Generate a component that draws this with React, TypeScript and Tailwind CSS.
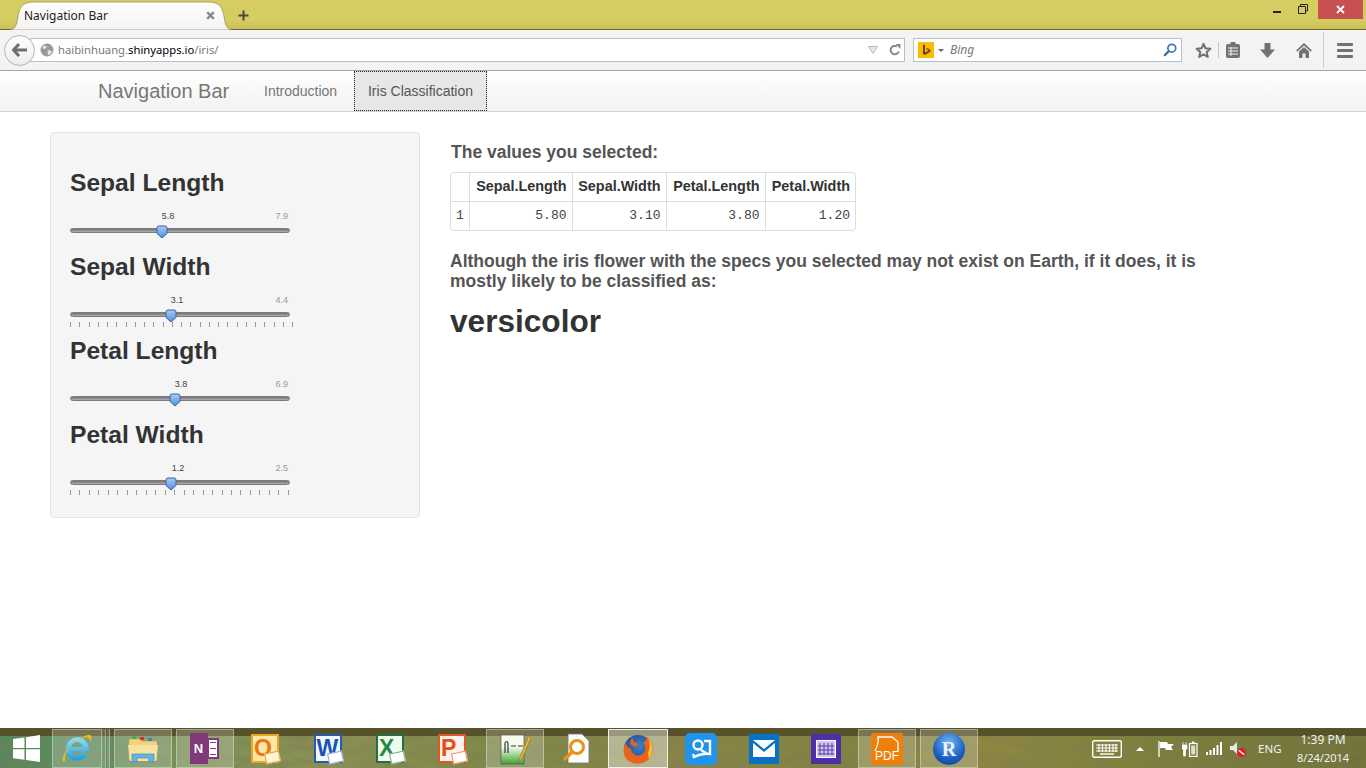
import React from "react";

const sliders = [
  { label: "Sepal Length", value: "5.8", max: "7.9", thumb: 91, text: 98, ticks: 0, tickWidth: 0 },
  { label: "Sepal Width", value: "3.1", max: "4.4", thumb: 100, text: 107, ticks: 25, tickWidth: 223 },
  { label: "Petal Length", value: "3.8", max: "6.9", thumb: 104, text: 111, ticks: 0, tickWidth: 0 },
  { label: "Petal Width", value: "1.2", max: "2.5", thumb: 100, text: 108, ticks: 24, tickWidth: 219 },
];

const Thumb = () => (
  <svg width="12" height="14" viewBox="0 0 12 14">
    <defs>
      <linearGradient id="thumbFill" x1="0" y1="0" x2="0" y2="1">
        <stop offset="0" stopColor="#a9cdf2" />
        <stop offset="1" stopColor="#4d8fdc" />
      </linearGradient>
    </defs>
    <path d="M1 3 Q1 1 3 1 H9 Q11 1 11 3 V8.5 L6 13 L1 8.5 Z" fill="url(#thumbFill)" stroke="#3b5fa8" strokeWidth="1" />
  </svg>
);

const Slider = ({ s }: { s: (typeof sliders)[number] }) => (
  <div className="h-[84px]">
    <h3 className="h-[27px] pt-px text-[24.6px] leading-[26px] font-bold text-[#333]">{s.label}</h3>
    <div className="relative mt-[15px] h-[10px] w-[220px] text-[9px] leading-[10px]">
      <span className="absolute top-0 -translate-x-1/2 text-[#444]" style={{ left: s.text }}>{s.value}</span>
      <span className="absolute top-0 right-[2px] text-[#999]">{s.max}</span>
    </div>
    <div className="relative mt-[7px] h-[5px] w-[220px] rounded-[3px] border border-[#7c7c7c] bg-[linear-gradient(#6e6e6e,#b0b0b0)]">
      <div className="absolute top-[-4px] -translate-x-1/2" style={{ left: s.thumb }}>
        <Thumb />
      </div>
    </div>
    {s.ticks > 0 && (
      <div className="mt-[5px] flex justify-between" style={{ width: s.tickWidth }}>
        {Array.from({ length: s.ticks }).map((_, i) => (
          <span key={i} className="h-[5px] w-px bg-[#999]" />
        ))}
      </div>
    )}
  </div>
);

const TitleBar = () => (
  <div className="relative flex h-[30px] shrink-0 items-start justify-between border-b border-[#6f6a34] bg-[linear-gradient(#d6cd62,#d5cc62_70%,#c8bf58)]">
    <div className="relative ml-[10px] h-[29px] w-[222px]">
      <svg className="absolute top-0 left-0" width="222" height="30" viewBox="0 0 222 30">
        <defs>
          <linearGradient id="tabFill" x1="0" y1="0" x2="0" y2="1">
            <stop offset="0" stopColor="#ffffff" />
            <stop offset="1" stopColor="#f3f3f3" />
          </linearGradient>
        </defs>
        <path d="M0 30 C8 29 7 18 9 12 C11 5 15 2 24 2 H198 C207 2 211 5 213 12 C215 18 214 29 222 30 Z" fill="url(#tabFill)" stroke="#8f8a4c" strokeWidth="0.7" />
      </svg>
      <span className="absolute top-[7px] left-[14px] font-['Noto_Sans',sans-serif] text-[12px] leading-[17px] text-[#222]">Navigation Bar</span>
      <svg className="absolute top-[11px] left-[196px]" width="9" height="9" viewBox="0 0 9 9">
        <path d="M1.2 1.2 L7.8 7.8 M7.8 1.2 L1.2 7.8" stroke="#8a8a8a" strokeWidth="2.4" />
      </svg>
      <svg className="absolute top-[10px] left-[228px]" width="11" height="11" viewBox="0 0 11 11">
        <path d="M5.5 0.5 V10.5 M0.5 5.5 H10.5" stroke="#4a4a3a" strokeWidth="2" />
      </svg>
    </div>
    <div className="flex items-start">
      <span className="mt-[11px] mr-[17px] h-[2px] w-[8px] bg-[#222]" />
      <svg className="mt-[4px] mr-[10px]" width="10" height="10" viewBox="0 0 10 10">
        <path d="M2.5 2.5 V0.5 H9.5 V7 H7.5 M0.5 2.5 H7.5 V9.5 H0.5 Z" fill="none" stroke="#222" />
      </svg>
      <div className="mr-[3px] flex h-[19px] w-[45px] items-center justify-center bg-[#c75050]">
        <svg width="9" height="9" viewBox="0 0 9 9">
          <path d="M1 1 L8 8 M8 1 L1 8" stroke="#fff" strokeWidth="1.8" />
        </svg>
      </div>
    </div>
  </div>
);

const ToolBar = () => (
  <div className="relative flex h-[41px] shrink-0 items-center border-b border-[#a6a6a6] bg-[#f3f3f3]">
    <div className="relative z-10 ml-[4px] flex h-[31px] w-[31px] items-center justify-center rounded-full border border-[#b3b3b3] bg-[linear-gradient(#ffffff,#ececec)]">
      <svg width="16" height="14" viewBox="0 0 16 14">
        <path d="M7 1 L1.5 7 L7 13 M2 7 H15" fill="none" stroke="#6e6e6e" strokeWidth="3" />
      </svg>
    </div>
    <div className="-ml-[5px] flex h-[24px] w-[875px] items-center border border-[#b8c0cb] bg-white pl-[9px]">
      <svg width="14" height="14" viewBox="0 0 14 14">
        <circle cx="7" cy="7" r="6.5" fill="#9a9a9a" />
        <path d="M3 3 Q6 2 7 4 Q6 6 4 6 Q2 6 3 3 M8 7 L12 8 Q11 12 8 12 Q7 9 8 7" fill="#e4e4e4" />
      </svg>
      <span className="ml-[4px] font-['Noto_Sans',sans-serif] text-[11.25px] text-[#7a7a7a]">
        haibinhuang.<span className="text-black">shinyapps.io</span>/iris/
      </span>
      <svg className="mr-[11px] ml-auto" width="10" height="8" viewBox="0 0 10 8">
        <path d="M0.5 0.5 H9.5 L5 7.5 Z" fill="#e4e8ec" stroke="#b4bac2" />
      </svg>
      <svg className="mr-[3px]" width="12" height="12" viewBox="0 0 12 12">
        <path d="M9.8 7.5 A4.2 4.2 0 1 1 8 2.5" fill="none" stroke="#7f8a96" strokeWidth="2" />
        <path d="M6.5 0 H11.5 V5 Z" fill="#7f8a96" />
      </svg>
    </div>
    <div className="ml-[8px] flex h-[24px] w-[269px] items-center border border-[#b8c0cb] bg-white pl-[4px]">
      <div className="flex h-[16px] w-[16px] items-center justify-center bg-[#ffb900]">
        <svg width="9" height="12" viewBox="0 0 9 12">
          <path d="M1 0.5 L3 1 V8.5 L7 6.5 L4.8 5.5 L4.2 3.8 L8.5 5.8 V7.5 L3 11 L1 10 Z" fill="#5d4a20" />
        </svg>
      </div>
      <span className="mt-[1px] ml-[4px] h-0 w-0 border-x-[3px] border-t-[3px] border-x-transparent border-t-[#666]" />
      <span className="ml-[6px] font-['Noto_Sans',sans-serif] text-[12px] text-[#777] italic">Bing</span>
      <svg className="mr-[4px] ml-auto" width="14" height="14" viewBox="0 0 14 14">
        <circle cx="8.8" cy="5.2" r="3.9" fill="none" stroke="#3a7ab5" strokeWidth="1.7" />
        <path d="M6 8 L1.2 12.8" stroke="#2d6aa3" strokeWidth="2.2" />
      </svg>
    </div>
    <svg className="ml-[13px]" width="17" height="17" viewBox="0 0 17 17">
      <path d="M8.5 1.8 L10.5 6.3 L15.4 6.8 L11.7 10 L12.8 14.9 L8.5 12.4 L4.2 14.9 L5.3 10 L1.6 6.8 L6.5 6.3 Z" fill="none" stroke="#6f7174" strokeWidth="2" strokeLinejoin="round" />
    </svg>
    <span className="ml-[6px] h-[16px] w-px bg-[#c5c5c5]" />
    <svg className="ml-[7px]" width="14" height="16" viewBox="0 0 14 16">
      <rect x="0" y="2" width="14" height="14" rx="2" fill="#707275" />
      <rect x="4.5" y="0" width="5" height="4" fill="#707275" />
      <path d="M2 6 H12 M2 9 H12 M2 12 H12 M5 5 V14" stroke="#f0f0f0" strokeWidth="1" />
    </svg>
    <svg className="ml-[20px]" width="15" height="15" viewBox="0 0 15 15">
      <path d="M4.5 0 H10.5 V6.5 H15 L7.5 15 L0 6.5 H4.5 Z" fill="#707275" />
    </svg>
    <svg className="ml-[21px]" width="16" height="15" viewBox="0 0 16 15">
      <path d="M8 0 L16 7.5 L14.6 8.5 L8 2.6 L1.4 8.5 L0 7.5 Z" fill="#707275" />
      <path d="M3 8.5 L8 4 L13 8.5 V15 H9.5 V10.5 H6.5 V15 H3 Z" fill="#707275" />
    </svg>
    <span className="ml-[11px] h-[36px] w-px bg-[#cfcfcf]" />
    <div className="ml-[13px] flex w-[16px] flex-col gap-[3px]">
      <span className="h-[3px] rounded-[1px] bg-[#6f7174]" />
      <span className="h-[3px] rounded-[1px] bg-[#6f7174]" />
      <span className="h-[3px] rounded-[1px] bg-[#6f7174]" />
    </div>
  </div>
);

const NavBar = () => (
  <nav className="flex h-[41px] shrink-0 items-center border-b border-[#d4d4d4] bg-[linear-gradient(#ffffff,#f2f2f2)] pl-[98px] text-[14px] text-[#777]">
    <span className="w-[166px] text-[20px]">Navigation Bar</span>
    <span className="w-[90px]">Introduction</span>
    <span className="flex h-[40px] w-[133px] items-center justify-center border border-dotted border-[#222] bg-[#e7e7e7] text-[#555]">Iris Classification</span>
  </nav>
);

const headers = ["Sepal.Length", "Sepal.Width", "Petal.Length", "Petal.Width"];
const values = ["5.80", "3.10", "3.80", "1.20"];

const ValuesTable = () => (
  <div className="w-[406px] overflow-hidden rounded-[4px] border border-[#ddd]">
    <table className="w-full table-fixed border-collapse">
      <colgroup>
        <col className="w-[18px]" />
        <col className="w-[103px]" />
        <col className="w-[94px]" />
        <col className="w-[99px]" />
        <col />
      </colgroup>
      <tbody>
        <tr className="h-[28px]">
          <td className="border-r border-b border-[#ddd]" />
          {headers.map((h) => (
            <th key={h} className="border-r border-b border-[#ddd] pt-px pr-[5px] text-right text-[14.4px] font-bold text-[#333] last:border-r-0">{h}</th>
          ))}
        </tr>
        <tr className="h-[29px] font-['Liberation_Mono',monospace] text-[13px] text-[#444]">
          <td className="border-r border-[#ddd] pl-[5px]">1</td>
          {values.map((v) => (
            <td key={v} className="border-r border-[#ddd] pr-[5px] text-right last:border-r-0">{v}</td>
          ))}
        </tr>
      </tbody>
    </table>
  </div>
);

const TaskBtn = ({ w, active, children }: { w: string; active?: boolean; children: React.ReactNode }) => (
  <div className={`flex h-[39px] shrink-0 items-center justify-center border ${w} ${active ? "border-[#f0f0ec] bg-white/40" : "border-white/35 bg-white/20"}`}>
    {children}
  </div>
);

const Pin = ({ w, children }: { w: string; children: React.ReactNode }) => (
  <div className={`flex h-[39px] shrink-0 items-center justify-center ${w}`}>{children}</div>
);

const WinLogo = () => (
  <svg width="27" height="27" viewBox="0 0 27 27">
    <path d="M0 4 L11.5 2.4 V13 H0 Z M13 2.2 L27 0 V13 H13 Z M0 14.3 H11.5 V24.8 L0 23.2 Z M13 14.3 H27 V27 L13 25 Z" fill="#fff" />
  </svg>
);

const IeIcon = () => (
  <svg width="34" height="34" viewBox="0 0 32 32">
    <defs>
      <linearGradient id="ieFill" x1="0" y1="0" x2="0" y2="1">
        <stop offset="0" stopColor="#8fe0f8" />
        <stop offset="1" stopColor="#1f9be0" />
      </linearGradient>
    </defs>
    <path d="M16 5 A11 11 0 1 0 26.5 20 H20 A5.5 5.5 0 0 1 10.5 18 H27 A11 11 0 0 0 16 5 Z M10.6 14 A5.5 5.5 0 0 1 21.4 14 Z" fill="url(#ieFill)" fillRule="evenodd" />
    <path d="M3 28 C0 22 12 8 25 3 C30 1 31 5 28 10 C29 4 24 4 18 7 C9 12 3 22 5 27 Z" fill="#f4b81f" />
  </svg>
);

const FolderIcon = () => (
  <svg width="32" height="30" viewBox="0 0 32 30">
    <path d="M2 5 H13 L15 7 H30 V26 H2 Z" fill="#f1d27d" stroke="#c9a650" strokeWidth="0.7" />
    <rect x="5" y="2" width="4" height="3" fill="#3eb54a" />
    <rect x="13" y="3" width="4" height="3" fill="#c8382d" />
    <rect x="21" y="4" width="4" height="3" fill="#3b7fd0" />
    <path d="M1 11 H31 L29 27 H3 Z" fill="#f7e3a1" />
    <path d="M5 28 V20 H27 V28 H22 V24 H10 V28 Z" fill="#66b4e2" stroke="#3e8cc0" strokeWidth="0.7" />
  </svg>
);

const OneNoteIcon = () => (
  <div className="relative h-[31px] w-[31px]">
    <span className="absolute top-[5px] left-[17px] flex h-[21px] w-[12px] flex-col justify-around border-2 border-[#80397b] bg-white px-px">
      <span className="h-px bg-[#80397b]" />
      <span className="h-px bg-[#80397b]" />
      <span className="h-px bg-[#80397b]" />
    </span>
    <span className="absolute top-0 left-0 flex h-[31px] w-[18px] items-center justify-center bg-[#80397b] text-[13px] font-bold text-white">N</span>
  </div>
);

const OfficeTile = ({ letter, bg, color, border, sheet }: { letter: string; bg: string; color: string; border: string; sheet: string }) => (
  <div className={`relative flex h-[29px] w-[28px] items-center justify-start border-2 pl-px ${bg} ${border}`}>
    <span className={`text-[23px] leading-none font-bold ${color}`}>{letter}</span>
    <span className={`absolute right-[-3px] bottom-[-2px] h-[11px] w-[15px] -rotate-12 border ${sheet}`} />
  </div>
);

const NppIcon = () => (
  <svg width="32" height="32" viewBox="0 0 32 32">
    <defs>
      <linearGradient id="nppFill" x1="0" y1="0" x2="0" y2="1">
        <stop offset="0.4" stopColor="#f6fbf0" />
        <stop offset="1" stopColor="#3fa52c" />
      </linearGradient>
    </defs>
    <rect x="2" y="2" width="23" height="29" fill="url(#nppFill)" stroke="#555" strokeWidth="0.7" />
    <path d="M6 20 V10 Q8 7 9 10 V20 M12 13 H17 M19 13 H24" fill="none" stroke="#333" strokeWidth="1.2" />
    <path d="M30 2 L21 24 L19 29 L23 26 L32 5 Z" fill="#e8b33c" stroke="#8a6a20" strokeWidth="0.6" />
  </svg>
);

const FileSearchIcon = () => (
  <svg width="28" height="32" viewBox="0 0 28 32">
    <path d="M6 1 H20 L27 8 V30 H6 Z" fill="#fbfbfb" stroke="#777" strokeWidth="0.8" />
    <circle cx="15" cy="14" r="6.5" fill="#fff" stroke="#e8911d" strokeWidth="3" />
    <path d="M10 19 L2 27" stroke="#e8911d" strokeWidth="3.5" />
  </svg>
);

const FirefoxIcon = () => (
  <svg width="32" height="32" viewBox="0 0 32 32">
    <defs>
      <radialGradient id="ffBlue" cx="0.55" cy="0.4" r="0.6">
        <stop offset="0" stopColor="#3f7fc8" />
        <stop offset="1" stopColor="#1d4a8c" />
      </radialGradient>
    </defs>
    <circle cx="16" cy="16" r="14" fill="url(#ffBlue)" />
    <path d="M24 3 C31 8 33 18 27 26 C21 32 9 33 3 24 C1 19 1 14 4 10 C5 14 7 15 9 16 C9 20 14 24 19 22 C24 20 25 14 21 10 C23 9 25 7 24 3 Z" fill="#e8641c" />
    <path d="M27 26 C32 18 31 9 24 3 C28 6 29 14 26 20 Z" fill="#f9c32a" />
    <path d="M10 4 L12 9 L17 11 L13 14 L8 11 Z" fill="#e8641c" />
  </svg>
);

const BaiduIcon = () => (
  <div className="flex h-[32px] w-[32px] items-center justify-center rounded-[5px] bg-[#1e94ec]">
    <svg width="24" height="24" viewBox="0 0 24 24">
      <circle cx="9" cy="8" r="4.5" fill="none" stroke="#fff" strokeWidth="2.4" />
      <path d="M15 4 H21 V17 Q14 16 5 20 L4 17 M12 13 L17 16" fill="none" stroke="#fff" strokeWidth="2.4" />
    </svg>
  </div>
);

const MailIcon = () => (
  <div className="flex h-[30px] w-[30px] items-center justify-center bg-[#0672c4]">
    <svg width="22" height="17" viewBox="0 0 22 17">
      <path d="M0 0 H22 L11 9 Z M0 3 L11 12 L22 3 V17 H0 Z" fill="#fff" />
    </svg>
  </div>
);

const CalendarIcon = () => (
  <div className="flex h-[30px] w-[30px] items-center justify-center bg-[#4e2fa6]">
    <svg width="20" height="18" viewBox="0 0 20 18">
      <rect x="0.5" y="0.5" width="19" height="17" fill="#cfc6ea" stroke="#fff" />
      <path d="M4 3 V15 M8 3 V15 M12 3 V15 M16 3 V15 M2 6 H18 M2 10 H18 M2 14 H18" stroke="#5a3ab0" strokeWidth="1" />
    </svg>
  </div>
);

const PdfIcon = () => (
  <div className="relative flex h-[32px] w-[32px] items-end justify-center rounded-[2px] bg-[#f07f09] pb-[2px]">
    <span className="text-[12px] leading-[13px] font-normal text-white">PDF</span>
    <svg className="absolute top-[2px] left-[3px]" width="26" height="16" viewBox="0 0 26 16">
      <path d="M1 16 Q5 8 4 2 H18 L24 7 V16" fill="none" stroke="#fff" strokeWidth="1.4" />
    </svg>
  </div>
);

const RIcon = () => (
  <div className="flex h-[32px] w-[32px] items-center justify-center rounded-full bg-[radial-gradient(circle_at_50%_30%,#6fb5f0,#1a5fc0_60%,#0c3a8c)]">
    <span className="font-['Liberation_Serif',serif] text-[20px] leading-none font-bold text-[#e8f2ff]">R</span>
  </div>
);

const Tray = () => (
  <div className="ml-auto flex h-[40px] shrink-0 items-center text-white">
    <svg width="30" height="18" viewBox="0 0 30 18">
      <rect x="0.7" y="0.7" width="28.6" height="16.6" rx="1.5" fill="none" stroke="#fff" strokeWidth="1.4" />
      <path d="M4 5 H26 M4 8 H26 M4 11 H26 M7 4 V12 M10.5 4 V12 M14 4 V12 M17.5 4 V12 M21 4 V12 M24 4 V12" stroke="#fff" strokeWidth="1.1" />
      <path d="M8 14 H22" stroke="#fff" strokeWidth="1.4" />
    </svg>
    <span className="ml-[14px] h-0 w-0 border-x-[4px] border-b-[4px] border-x-transparent border-b-white" />
    <svg className="ml-[14px]" width="16" height="16" viewBox="0 0 16 16">
      <path d="M1 0 V16" stroke="#fff" strokeWidth="1.3" />
      <path d="M2 1 H9 L10 3 H16 L13 6 L15 9 H8 L7 7 H2 Z" fill="#fff" />
    </svg>
    <svg className="ml-[8px]" width="16" height="16" viewBox="0 0 16 16">
      <path d="M1 1 V4 M4 1 V4 M0 4 H5 V8 H3.5 V15 H1.5 V8 H0 Z" fill="#fff" stroke="#fff" strokeWidth="0.7" />
      <rect x="7.5" y="2.5" width="7.5" height="13" fill="none" stroke="#fff" strokeWidth="1.2" />
      <rect x="10" y="0.5" width="2.5" height="2" fill="#fff" />
      <rect x="9.2" y="4.5" width="4" height="9" fill="#fff" opacity="0.75" />
    </svg>
    <svg className="ml-[8px]" width="16" height="13" viewBox="0 0 16 13">
      <path d="M0 10 H2 V13 H0 Z M3.5 8 H5.5 V13 H3.5 Z M7 6 H9 V13 H7 Z M10.5 3 H12.5 V13 H10.5 Z M14 0 H16 V13 H14 Z" fill="#fff" />
    </svg>
    <svg className="ml-[8px]" width="16" height="16" viewBox="0 0 16 16">
      <path d="M0 5 H3 L7 1 V13 L3 9 H0 Z" fill="#e8e8e8" />
      <circle cx="11.5" cy="11.5" r="4.5" fill="#d9232e" />
      <path d="M8.8 9.5 L14.2 13.5" stroke="#fff" strokeWidth="1.5" />
    </svg>
    <span className="ml-[12px] w-[24px] font-['Noto_Sans',sans-serif] text-[11.5px] text-[#f2f2f2]">ENG</span>
    <div className="mr-[16px] ml-[14px] flex w-[54px] flex-col items-center font-['Noto_Sans',sans-serif] text-[12px] leading-[18px] text-[#f2f2f2]">
      <span>1:39 PM</span>
      <span className="text-[11px]">8/24/2014</span>
    </div>
  </div>
);

const TaskBar = () => (
  <div className="relative flex h-[40px] shrink-0 items-end overflow-hidden bg-[linear-gradient(90deg,#4f8a62_0%,#5f8f5f_8%,#7c9458_14%,#8d9256_24%,#7f8b47_36%,#8a8445_50%,#84843f_62%,#90883f_72%,#7c7f3a_85%,#6f7136_100%)]">
    <svg className="absolute inset-0" width="1366" height="40">
      <filter id="terrain">
        <feTurbulence type="fractalNoise" baseFrequency="0.035 0.12" numOctaves="4" seed="7" />
        <feColorMatrix values="0 0 0 0 0.2  0 0 0 0 0.2  0 0 0 0 0.08  0.9 0 0 0 -0.2" />
      </filter>
      <rect width="1366" height="40" filter="url(#terrain)" />
    </svg>
    <div className="absolute top-0 right-0 left-0 h-[8px] bg-[#57522a]" />
    <div className="relative flex h-[39px] w-full items-center">
      <Pin w="w-[52px]"><WinLogo /></Pin>
      <TaskBtn w="w-[50px]"><IeIcon /></TaskBtn>
      <span className="h-[39px] w-[4px] shrink-0 border-r border-white/35 bg-white/15" />
      <span className="ml-px h-[39px] w-[3px] shrink-0 border-r border-white/35 bg-white/15" />
      <span className="w-[4px] shrink-0" />
      <TaskBtn w="w-[58px]"><FolderIcon /></TaskBtn>
      <span className="w-[4px] shrink-0" />
      <TaskBtn w="w-[58px]"><OneNoteIcon /></TaskBtn>
      <Pin w="w-[62px]"><OfficeTile letter="O" bg="bg-[#fbe7a8]" color="text-[#e8780c]" border="border-[#eda51f]" sheet="bg-[#fff4d6] border-[#d9a040]" /></Pin>
      <Pin w="w-[63px]"><OfficeTile letter="W" bg="bg-[#f2f6ff]" color="text-[#1a55b0]" border="border-[#2a5caa]" sheet="bg-[#ffffff] border-[#8aa8d8]" /></Pin>
      <Pin w="w-[62px]"><OfficeTile letter="X" bg="bg-[#eefaee]" color="text-[#1f8a45]" border="border-[#1f7246]" sheet="bg-[#ffffff] border-[#6db088]" /></Pin>
      <Pin w="w-[62px]"><OfficeTile letter="P" bg="bg-[#fff0e8]" color="text-[#e0501b]" border="border-[#e0552a]" sheet="bg-[#ffffff] border-[#e8906a]" /></Pin>
      <span className="w-[3px] shrink-0" />
      <TaskBtn w="w-[58px]"><NppIcon /></TaskBtn>
      <Pin w="w-[64px]"><FileSearchIcon /></Pin>
      <TaskBtn w="w-[60px]" active><FirefoxIcon /></TaskBtn>
      <Pin w="w-[66px]"><BaiduIcon /></Pin>
      <Pin w="w-[60px]"><MailIcon /></Pin>
      <Pin w="w-[64px]"><CalendarIcon /></Pin>
      <TaskBtn w="w-[58px]"><PdfIcon /></TaskBtn>
      <span className="w-[4px] shrink-0" />
      <TaskBtn w="w-[58px]"><RIcon /></TaskBtn>
      <Tray />
    </div>
  </div>
);

export default function App() {
  return (
    <div className="flex h-[768px] w-[1366px] flex-col overflow-hidden bg-white font-['Liberation_Sans',Arial,sans-serif]">
      <TitleBar />
      <ToolBar />
      <NavBar />
      <main className="flex flex-1 items-start pt-[20px] pl-[50px]">
        <aside className="h-[386px] w-[370px] shrink-0 rounded-[4px] border border-[#e3e3e3] bg-[#f5f5f5] pt-[36px] pl-[19px]">
          {sliders.map((s) => (
            <Slider key={s.label} s={s} />
          ))}
        </aside>
        <section className="ml-[30px]">
          <h4 className="mt-[10px] ml-px h-[20px] text-[17.5px] leading-[20px] font-bold text-[#555]">The values you selected:</h4>
          <div className="mt-[10px]">
            <ValuesTable />
          </div>
          <p className="mt-[20px] w-[760px] text-[17.5px] leading-[20px] font-bold text-[#555]">
            Although the iris flower with the specs you selected may not exist on Earth, if it does, it is
            <br />
            mostly likely to be classified as:
          </p>
          <p className="mt-[10px] text-[31.6px] leading-[40px] font-bold text-[#333]">versicolor</p>
        </section>
      </main>
      <TaskBar />
    </div>
  );
}
